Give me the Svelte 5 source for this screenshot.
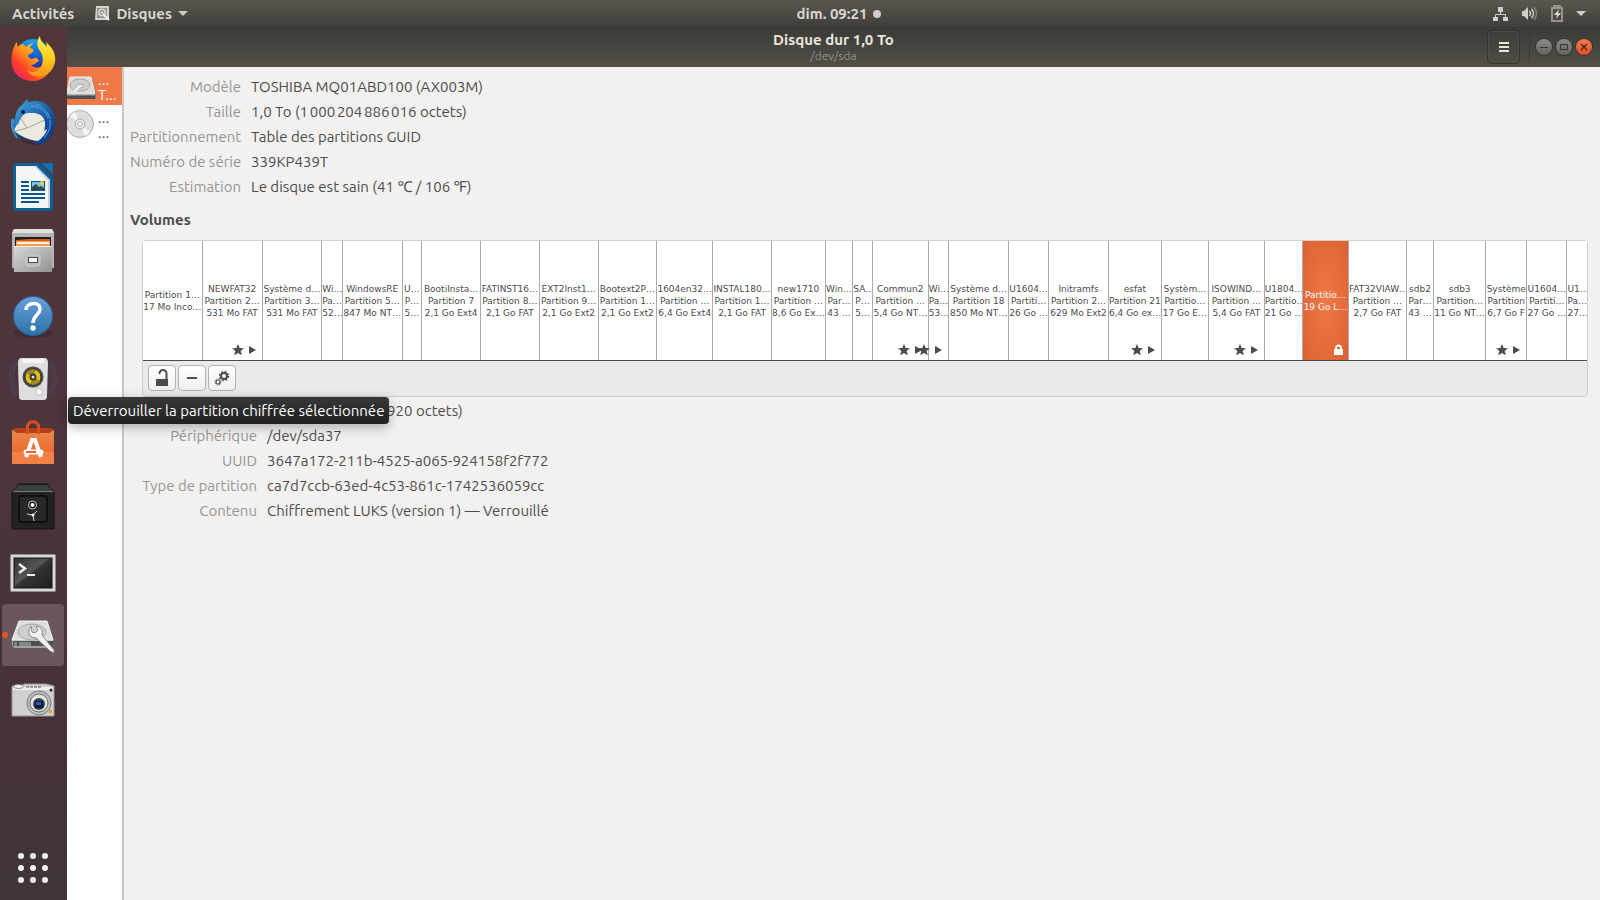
<script lang="ts">
  type Volume = {
    size: number;
    lines: string[];
    boot?: boolean;
    locked?: boolean;
  };

  const dock = [
    { id: 'firefox', label: 'Firefox' },
    { id: 'thunderbird', label: 'Thunderbird' },
    { id: 'writer', label: 'LibreOffice Writer' },
    { id: 'files', label: 'Fichiers' },
    { id: 'help', label: 'Aide' },
    { id: 'speaker', label: 'Rhythmbox' },
    { id: 'software', label: 'Logiciels' },
    { id: 'safe', label: 'Coffre' },
    { id: 'terminal', label: 'Terminal' },
    { id: 'disks', label: 'Disques' },
    { id: 'camera', label: "Capture d'écran" },
  ];

  const diskInfo = [
    ['Modèle', 'TOSHIBA MQ01ABD100 (AX003M)'],
    ['Taille', '1,0 To (1\u202f000\u202f204\u202f886\u202f016 octets)'],
    ['Partitionnement', 'Table des partitions GUID'],
    ['Numéro de série', '339KP439T'],
    ['Estimation', 'Le disque est sain (41 ℃ / 106 ℉)'],
  ];

  const volumeInfo = [
    ['Taille', '19 Go (18\u202f999\u202f491\u202f920 octets)'],
    ['Périphérique', '/dev/sda37'],
    ['UUID', '3647a172-211b-4525-a065-924158f2f772'],
    ['Type de partition', 'ca7d7ccb-63ed-4c53-861c-1742536059cc'],
    ['Contenu', 'Chiffrement LUKS (version 1) — Verrouillé'],
  ];

  const volumes: Volume[] = [
    { size: 60, lines: ['Partition 1…', '17 Mo Inco…'] },
    { size: 60, lines: ['NEWFAT32', 'Partition 2…', '531 Mo FAT'], boot: true },
    { size: 60, lines: ['Système d…', 'Partition 3…', '531 Mo FAT'] },
    { size: 20, lines: ['Wi…', 'Pa…', '52…'] },
    { size: 60, lines: ['WindowsRE', 'Partition 5…', '847 Mo NT…'] },
    { size: 19, lines: ['U…', 'P…', '5…'] },
    { size: 59, lines: ['BootiInsta…', 'Partition 7', '2,1 Go Ext4'] },
    { size: 59, lines: ['FATINST16…', 'Partition 8…', '2,1 Go FAT'] },
    { size: 59, lines: ['EXT2Inst1…', 'Partition 9…', '2,1 Go Ext2'] },
    { size: 59, lines: ['Bootext2P…', 'Partition 1…', '2,1 Go Ext2'] },
    { size: 56, lines: ['1604en32…', 'Partition …', '6,4 Go Ext4'] },
    { size: 59, lines: ['INSTAL180…', 'Partition 1…', '2,1 Go FAT'] },
    { size: 54, lines: ['new1710', 'Partition …', '8,6 Go Ex…'] },
    { size: 27, lines: ['Win…', 'Par…', '43 …'] },
    { size: 19, lines: ['SA…', 'P…', '5…'] },
    { size: 56, lines: ['Commun2', 'Partition …', '5,4 Go NT…'], boot: true },
    { size: 20, lines: ['Wi…', 'Pa…', '53…'], boot: true },
    { size: 60, lines: ['Système d…', 'Partition 18', '850 Mo NT…'] },
    { size: 40, lines: ['U1604…', 'Partiti…', '26 Go …'] },
    { size: 60, lines: ['Initramfs', 'Partition 2…', '629 Mo Ext2'] },
    { size: 53, lines: ['esfat', 'Partition 21', '6,4 Go ex…'], boot: true },
    { size: 47, lines: ['Systèm…', 'Partitio…', '17 Go E…'] },
    { size: 56, lines: ['ISOWIND…', 'Partition …', '5,4 Go FAT'], boot: true },
    { size: 38, lines: ['U1804…', 'Partitio…', '21 Go …'] },
    { size: 46, lines: ['Partitio…', '19 Go L…'], locked: true },
    { size: 58, lines: ['FAT32VIAW…', 'Partition …', '2,7 Go FAT'] },
    { size: 27, lines: ['sdb2', 'Par…', '43 …'] },
    { size: 52, lines: ['sdb3', 'Partition…', '11 Go NT…'] },
    { size: 41, lines: ['Système', 'Partition', '6,7 Go F'], boot: true },
    { size: 40, lines: ['U1604…', 'Partiti…', '27 Go …'] },
    { size: 20, lines: ['U1…', 'Pa…', '27…'] },
  ];

  let selected = $state(24);
</script>

{#snippet caret()}
  <svg width="10" height="6" viewBox="0 0 10 6"><path d="M0 0h10L5 5z" fill="#d0cec9" /></svg>
{/snippet}

{#snippet details(rows: string[][], nested: boolean)}
  <dl class="details" class:nested>
    {#each rows as [label, value]}
      <dt>{label}</dt>
      <dd>{value}</dd>
    {/each}
  </dl>
{/snippet}

{#snippet dockIcon(id: string)}
  <svg width="48" height="48" viewBox="0 0 48 48">
    {#if id === 'firefox'}
      <defs>
        <linearGradient id="ff-body" x1="1" y1="0" x2="0" y2="1">
          <stop offset="0.1" stop-color="#ffe83a" />
          <stop offset="0.45" stop-color="#ff9a1a" />
          <stop offset="0.7" stop-color="#ff4028" />
          <stop offset="1" stop-color="#e0108c" />
        </linearGradient>
        <linearGradient id="ff-globe" x1="0" y1="0" x2="0" y2="1">
          <stop offset="0" stop-color="#12a3f5" />
          <stop offset="0.6" stop-color="#1c4fc8" />
          <stop offset="1" stop-color="#3b1b80" />
        </linearGradient>
        <linearGradient id="ff-tail" x1="0" y1="0" x2="0" y2="1">
          <stop offset="0" stop-color="#fff44f" />
          <stop offset="0.5" stop-color="#ffd21e" />
          <stop offset="1" stop-color="#ff9016" />
        </linearGradient>
      </defs>
      <circle cx="24" cy="21" r="17" fill="url(#ff-globe)" />
      <path d="M8 7c0 2 0 3 1 5 1-2 3-3 5-3l3 3c3-3 5-4 8-4-2 1-4 3-4 5l3 1c1 3-1 4-5 6 0 2 1 3 3 4 2 0 4-2 6-1l2 3c-2 0-3 4-8 4 5 5 14 3 15-7 2-5 0-9-2-12 8 4 10 13 9 16-2 12-11 19-20 19C11 46 2 37 2.500 25 2.500 17 5 10 8 7z" fill="url(#ff-body)" />
      <path d="M31 1c-3 4-4 10 0 15 3 4 4 10 1 16-3 6-10 6-14 3 4 8 16 9 23 2 7-8 7-18 0-26-1-1-3-3-4-4l1 5c-3-3-7-6-7-11z" fill="url(#ff-tail)" />
    {:else if id === 'thunderbird'}
      <defs>
        <linearGradient id="tb" x1="0" y1="0" x2="1" y2="1">
          <stop offset="0" stop-color="#3fa9e0" />
          <stop offset="0.5" stop-color="#1d62ac" />
          <stop offset="1" stop-color="#0b2a78" />
        </linearGradient>
      </defs>
      <path d="M6 21C6 10 15 3 25 2c13-1 22 10 21 23-1 11-8 19-17 21l-7-4C8 44 2 34 2 25c0-3 1-4 2-6z" fill="url(#tb)" />
      <path d="M5 31l9-16c6-4 17-2 24 4 4 5 0 17-9 23-9-1-19-5-24-11z" fill="#ece9e1" />
      <path d="M10 17l8 12 20-9M18 29l-12 3" fill="none" stroke="#aaa69b" />
      <path d="M13 6l5-6 2 5c11-4 22 3 25 11 3 15-4 25-15 29l7-7 1-8-3 2c4-13-3-19-14-18-7-1-10 6-12 12-5-8-1-17 4-20z" fill="url(#tb)" />
      <path d="M22 7c9 0 14 5 17 12M27 5c7 2 12 8 14 15M41 21c1 8-2 13-6 18M3 20c-1 8 1 14 5 19" fill="none" stroke="#54a9e4" />
      <path d="M7 35c7 4 15 5 22 11-8 1-17-2-22-11z" fill="#3b2727" opacity=".75" />
      <circle cx="14" cy="13" r="2" fill="#0a1a3a" />
    {:else if id === 'writer'}
      <path d="M7 0h23l14 14v31a3 3 0 0 1-3 3H7a3 3 0 0 1-3-3V3a3 3 0 0 1 3-3z" fill="#0a6096" />
      <path d="M32 0h12v12z" fill="#0873b0" />
      <path d="M7 3h20l14 14v28H7z" fill="#f4f5f6" />
      <path d="M27 3l14 14v28h-2V18L26 4z" fill="#cfd2d4" />
      <path d="M12 19h8M12 23h8M12 27h8M12 31h24M12 35h24M12 39h18" stroke="#0a5585" stroke-width="2" />
      <path d="M22 18h14v10H22z" fill="#0a5585" />
      <path d="M23 19h12v8H23z" fill="#79c3f0" />
      <path d="M23 27v-3l4-3 3 3 2-1 3 2v2z" fill="#36464b" />
      <circle cx="33" cy="20" r="2" fill="#f6ce3c" />
    {:else if id === 'files'}
      <defs>
        <linearGradient id="cab" x1="0" y1="0" x2="1" y2="1">
          <stop offset="0" stop-color="#d8d8d8" />
          <stop offset="1" stop-color="#929292" />
        </linearGradient>
      </defs>
      <path d="M5 2h38l2 4v35H3V6z" fill="#b4b4b4" />
      <path d="M5 2h38l2 4H3z" fill="#e0e0df" />
      <path d="M6 10h36v11H6z" fill="#1f1f1f" />
      <path d="M7 13l13-1h21v8H7z" fill="#d6581c" />
      <path d="M7 14h34v6H7z" fill="#f3a04b" />
      <path d="M8 15h32v2H8z" fill="#fff0d8" />
      <path d="M5 19h38v26H5z" fill="url(#cab)" />
      <path d="M5 19h38v1H5z" fill="#ededed" />
      <rect x="17" y="28" width="14" height="11" rx="2" fill="#b9b9b9" stroke="#cecece" />
      <rect x="19.500" y="30.500" width="9" height="5" fill="#f3f3f3" stroke="#4c4c4c" />
    {:else if id === 'help'}
      <defs>
        <linearGradient id="hp" x1="0" y1="0" x2="0" y2="1">
          <stop offset="0" stop-color="#6ba0dc" />
          <stop offset="1" stop-color="#2a71a8" />
        </linearGradient>
      </defs>
      <ellipse cx="24" cy="42" rx="20" ry="5" fill="#3a262b" opacity=".5" />
      <circle cx="24" cy="25" r="19.500" fill="url(#hp)" stroke="#286096" />
      <path d="M17 19c0-8 14-9 14-1 0 6-7 6-7 14" fill="none" stroke="#fff" stroke-width="3.500" />
      <circle cx="24" cy="37" r="2.700" fill="#fff" />
    {:else if id === 'speaker'}
      <path d="M6 7C-1 16-1 31 7 40M9 8c-7 9-7 22 0 30M42 7c7 9 7 24-1 33M39 8c7 9 7 22 0 30" fill="none" stroke="#4a4a68" stroke-width="1.500" opacity=".65" />
      <path d="M13 3h22c3 0 4 2 4 5l-1 33c0 3-1 4-4 4H14c-3 0-4-1-4-4L9 8c0-3 1-5 4-5z" fill="#dededc" />
      <path d="M13 4h22v4H13z" fill="#f4f4f2" />
      <circle cx="24" cy="22" r="10.500" fill="#484a49" />
      <circle cx="24" cy="22" r="8" fill="#e3c019" stroke="#303130" />
      <path d="M24 22l-7-4a8 8 0 0 1 10-3zM24 22l7 4a8 8 0 0 1-10 3z" fill="#a48916" />
      <circle cx="24" cy="22" r="3.500" fill="#353b42" />
      <circle cx="24" cy="22" r="1.500" fill="#dfe3e5" />
      <circle cx="30" cy="37" r="3.500" fill="#f7f7f7" stroke="#bebebe" />
    {:else if id === 'software'}
      <defs>
        <linearGradient id="bag" x1="0" y1="0" x2="0" y2="1">
          <stop offset="0" stop-color="#e98a4f" />
          <stop offset="0.65" stop-color="#ed6b2e" />
          <stop offset="0.66" stop-color="#f08045" />
        </linearGradient>
      </defs>
      <path d="M3 11l3-2h36l3 2v5H3z" fill="#b63e19" />
      <path d="M3 11l5 3h32l5-3v34H3z" fill="url(#bag)" />
      <path d="M18.500 15V6l3-3h5l3 3v9" fill="none" stroke="#d94f1e" stroke-width="3" />
      <path d="M17 38l6-17h3l6 17" fill="none" stroke="#fff" stroke-width="4" />
      <path d="M17 33h15" stroke="#fff" stroke-width="5" stroke-linecap="round" />
      <path d="M17 33h10" stroke="#e9652b" stroke-width="2" />
    {:else if id === 'safe'}
      <path d="M10 1h28l7 8v37H3V9z" fill="#202321" stroke="#121312" />
      <path d="M10 2h28l6 6H4z" fill="#39413d" />
      <path d="M4 8.500h40" stroke="#777b70" />
      <rect x="10" y="13" width="28" height="26" rx="3" fill="#272926" stroke="#090a09" stroke-width="1.500" />
      <circle cx="23.500" cy="22" r="4" fill="#111" stroke="#c6c9c6" />
      <circle cx="23.500" cy="22" r="2" fill="#fff" />
      <path d="M24 32l-6-1M24 32l4-4M24 32l1 6" stroke="#d5d7d4" />
      <circle cx="24" cy="32" r="1.500" fill="#fff" />
    {:else if id === 'terminal'}
      <defs>
        <linearGradient id="term" x1="0" y1="0" x2="1" y2="1">
          <stop offset="0" stop-color="#333" />
          <stop offset="0.45" stop-color="#555" />
          <stop offset="0.5" stop-color="#343434" />
          <stop offset="1" stop-color="#1c1c1c" />
        </linearGradient>
      </defs>
      <rect x="1.500" y="7.500" width="45" height="37" rx="1" fill="#d8d8d8" stroke="#8d8d8d" />
      <rect x="5" y="11" width="38" height="30" fill="url(#term)" stroke="#111" />
      <path d="M10 17l6 4.500-6 4.500" fill="none" stroke="#eee" stroke-width="2.500" />
      <path d="M18 28h8" stroke="#eee" stroke-width="2" />
    {:else if id === 'disks'}
      <path d="M10 10h28l6 19v6l-3 2H6l-3-2v-6z" fill="#9fa19f" />
      <path d="M10 10h28l6 19H3z" fill="#dededc" stroke="#f4f4f2" />
      <ellipse cx="23" cy="21" rx="14" ry="8" fill="#cfcfcd" stroke="#a9a9a7" />
      <path d="M4 30h40v5H4z" fill="#4c504d" />
      <path d="M5 31h3v4H5zM10 31h12v4H10z" fill="#828783" />
      <path d="M22 15l1 6 3 1 3-3-2-4c6 1 7 5 6 9l12 15v3l-4-2-14-13c-6 0-10-5-5-12z" fill="#f1f1ef" stroke="#858783" />
    {:else}
      <path d="M3 11h9l3-2h22l8 2v30H3z" fill="#d0d0ce" stroke="#999" />
      <path d="M4 12h40v3H4z" fill="#eeeeec" />
      <ellipse cx="9.500" cy="11.500" rx="5" ry="2" fill="#f2f2f0" stroke="#888" />
      <path d="M17 12h16" stroke="#555" stroke-dasharray="3 1" />
      <circle cx="30" cy="28" r="12" fill="#bdbfbf" stroke="#777b7c" />
      <circle cx="30" cy="28" r="9" fill="#e3e5e5" stroke="#666b6d" />
      <circle cx="30" cy="29" r="6" fill="#3e4142" />
      <path d="M26 26h8v7h-8z" fill="#061a3c" />
      <path d="M27 27h5v3h-5z" fill="#1e5fc2" />
      <circle cx="42" cy="15" r="1.500" fill="#222" />
      <path d="M40 35h3v3h-3z" fill="#ef9a1d" />
    {/if}
  </svg>
{/snippet}

<div class="desktop">
  <header class="topbar">
    <div class="top-left">
      <button>Activités</button>
      <button class="app-menu">
        <svg width="15" height="15" viewBox="0 0 15 15">
          <path d="M1 0h13v14H0z" fill="#d5d4d0" />
          <path d="M2 2h10v10H2z" fill="#8f8e88" />
          <circle cx="7" cy="6.500" r="4" fill="#d8d7d3" />
          <circle cx="7" cy="6.500" r="2" fill="none" stroke="#777670" />
          <path d="M8 8l6 6" stroke="#eee" stroke-width="2" />
        </svg>
        Disques
        {@render caret()}
      </button>
    </div>
    <button class="clock">dim. 09:21 <span class="dot"></span></button>
    <div class="top-right">
      <button class="status" aria-label="Menu système">
        <svg width="16" height="16" viewBox="0 0 16 16">
          <path d="M5 1h5v5H5zM0 11h5v4H0zM10 11h5v4h-5z" fill="#d0cec9" />
          <path d="M7.500 5v3M2.500 11V8.500h10V11" fill="none" stroke="#d0cec9" />
        </svg>
        <svg width="16" height="16" viewBox="0 0 16 16">
          <path d="M0 5h2l4-4v13l-4-4H0z" fill="#d0cec9" />
          <path d="M7.500 5q2 2.500 0 5M9.500 3q4 4.500 0 9" fill="none" stroke="#d0cec9" stroke-width="1.500" />
          <path d="M12 1q5 6.500 0 13" fill="none" stroke="#85837c" stroke-width="1.500" />
        </svg>
        <svg width="12" height="17" viewBox="0 0 12 17">
          <path d="M3 3V1h6v2M1 3h10v13H1z" fill="none" stroke="#96948d" stroke-width="2" />
          <path d="M8 4L3 10h3l-1 4 5-6H7z" fill="#d8d6d1" />
        </svg>
        {@render caret()}
      </button>
    </div>
  </header>

  <div class="workspace">
    <nav class="dock" aria-label="Applications">
      {#each dock as app}
        <button class="launcher" class:active={app.id === 'disks'} aria-label={app.label}>
          {@render dockIcon(app.id)}
        </button>
      {/each}
      <button class="launcher show-apps" aria-label="Afficher les applications">
        <svg width="30" height="30" viewBox="0 0 30 30" fill="#f2f1f0">
          {#each [3, 15, 27] as cy}
            {#each [3, 15, 27] as cx}
              <circle {cx} {cy} r="3" />
            {/each}
          {/each}
        </svg>
      </button>
    </nav>

    <section class="window">
      <header class="titlebar">
        <div class="title">
          <h1>Disque dur 1,0 To</h1>
          <p>/dev/sda</p>
        </div>
        <div class="title-actions">
          <button class="hamburger" aria-label="Menu">
            <svg width="10" height="11" viewBox="0 0 10 11"><path d="M0 1h10M0 5h10M0 9h10" stroke="#e8e5dc" stroke-width="2" /></svg>
          </button>
          <span class="divider"></span>
          <button class="control" aria-label="Réduire">
            <svg width="8" height="8" viewBox="0 0 8 8"><path d="M0 4.500h8" stroke="#35342f" /></svg>
          </button>
          <button class="control" aria-label="Restaurer">
            <svg width="8" height="8" viewBox="0 0 8 8"><path d="M.5 1.500h7v5h-7z" fill="none" stroke="#35342f" /></svg>
          </button>
          <button class="control close" aria-label="Fermer">
            <svg width="8" height="8" viewBox="0 0 8 8"><path d="M1 1l6 6M7 1L1 7" stroke="#4a2113" stroke-width="1.200" /></svg>
          </button>
        </div>
      </header>

      <div class="panes">
        <aside class="drives">
          <button class="drive current" aria-label="Disque dur 1,0 To">
            <svg width="29" height="28" viewBox="0 -4 29 28">
              <path d="M3 1h22l4 17v5H0V17z" fill="#777977" />
              <path d="M3 1h21l4 17H0V16z" fill="#dcdcda" stroke="#eeeeec" />
              <ellipse cx="13" cy="9" rx="10" ry="6" fill="#cfcfcd" stroke="#aaa" />
              <ellipse cx="13" cy="10" rx="4" ry="2" fill="#e6e6e4" stroke="#aaa" />
              <path d="M13 10l-6 6" stroke="#f5f5f5" stroke-width="2" />
              <path d="M0 20h28v3H0z" fill="#4d504e" />
            </svg>
            <span class="drive-text"><span>...</span><span>T...</span></span>
          </button>
          <button class="drive" aria-label="Lecteur CD/DVD">
            <svg width="29" height="30" viewBox="0 0 29 30">
              <circle cx="13" cy="15" r="13.500" fill="#dedede" stroke="#aaa" />
              <path d="M13 15L3 7a13 13 0 0 1 5-4zM13 15l10 8a13 13 0 0 1-5 4z" fill="#f6f6f6" />
              <path d="M13 15L25 10v4zM13 15L1 20v-4z" fill="#e4dbe8" />
              <circle cx="13" cy="15" r="5" fill="#eee" stroke="#aaa" />
              <circle cx="13" cy="15" r="2.500" fill="#fff" stroke="#aaa" />
            </svg>
            <span class="drive-text"><span>...</span><span>...</span></span>
          </button>
        </aside>

        <main>
          {@render details(diskInfo, false)}

          <h2>Volumes</h2>
          <div class="volumes">
            <div class="segments">
              {#each volumes as volume, i}
                <button
                  class="segment"
                  class:selected={i === selected}
                  style="flex-grow: {volume.size}"
                  onclick={() => (selected = i)}
                >
                  <span class="segment-text">
                    {#each volume.lines as line}
                      <span>{line}</span>
                    {/each}
                  </span>
                  {#if volume.boot}
                    <svg class="marks" width="26" height="12" viewBox="0 0 26 12">
                      <path d="M6 0l1.700 3.900 4.300.3-3.300 2.900 1.100 4.200L6 9.100l-3.800 2.200 1.100-4.200L0 4.200l4.300-.3zM17 2v8l7-4z" fill="#4c4c4c" />
                    </svg>
                  {:else if volume.locked}
                    <svg class="marks" width="11" height="12" viewBox="0 0 11 12">
                      <path d="M1 5h9v6H1z" fill="#fff" />
                      <path d="M3 6V4a2.500 2.500 0 0 1 5 0v2" fill="none" stroke="#fff" stroke-width="1.800" />
                    </svg>
                  {/if}
                </button>
              {/each}
            </div>
            <div class="toolbar">
              <button aria-label="Déverrouiller la partition chiffrée sélectionnée" aria-describedby="unlock-tip">
                <svg width="16" height="18" viewBox="0 0 16 18">
                  <path d="M2 10h12v7H2z" fill="#4c4c4c" />
                  <path d="M5.500 5V4.500a3.500 3.500 0 0 1 7 0V11" fill="none" stroke="#4c4c4c" stroke-width="2" />
                </svg>
              </button>
              <button aria-label="Supprimer la partition">
                <svg width="16" height="16" viewBox="0 0 16 16"><path d="M3 8h10" stroke="#4c4c4c" stroke-width="2" /></svg>
              </button>
              <button aria-label="Options supplémentaires">
                <svg width="16" height="16" viewBox="0 0 16 16" fill="none" stroke="#4c4c4c">
                  <circle cx="10" cy="6" r="3" stroke-width="2" />
                  <circle cx="10" cy="6" r="4.500" stroke-width="1.500" stroke-dasharray="1.800 1.734" />
                  <circle cx="4" cy="12" r="2" stroke-width="1.200" />
                  <circle cx="4" cy="12" r="3" stroke-dasharray="1.200 1.156" />
                </svg>
              </button>
              <div class="tooltip" role="tooltip" id="unlock-tip">
                Déverrouiller la partition chiffrée sélectionnée
              </div>
            </div>
          </div>

          {@render details(volumeInfo, true)}
        </main>
      </div>
    </section>
  </div>
</div>

<style>
  :global(body) {
    margin: 0;
  }

  .desktop {
    display: flex;
    flex-direction: column;
    min-height: 100vh;
    font-family: Ubuntu, 'Noto Sans', sans-serif;
    font-size: 15px;
    color: #4c4c4c;
    background: #f2f1f0;
  }
  button {
    padding: 0;
    border: none;
    background: none;
    color: inherit;
    font: inherit;
  }
  svg {
    display: block;
    flex: none;
  }
  h1, h2, p, dl, dt, dd {
    margin: 0;
  }

  .topbar {
    display: flex;
    align-items: center;
    height: 27px;
    padding: 0 14px 0 12px;
    background: linear-gradient(#5a574e, #403f3a);
    color: #d8d6d1;
    font-weight: 700;
  }
  .top-left, .top-right {
    display: flex;
    flex: 1;
    gap: 21px;
  }
  .top-right {
    justify-content: flex-end;
  }
  .app-menu, .clock, .status {
    display: flex;
    align-items: center;
    gap: 6px;
  }
  .clock {
    margin-left: 80px;
  }
  .status {
    gap: 13px;
  }
  .dot {
    width: 8px;
    height: 8px;
    border-radius: 50%;
    background: #d0cec9;
  }

  .workspace {
    display: flex;
    flex: 1;
  }
  .dock {
    display: flex;
    flex-direction: column;
    gap: 2px;
    flex: none;
    width: 65px;
    padding: 1px 0 1px 2px;
    background: linear-gradient(#523639, #4c353c 50%, #463138 80%, #3f3537);
  }
  .launcher {
    position: relative;
    display: flex;
    align-items: center;
    justify-content: center;
    width: 62px;
    height: 62px;
    border-radius: 4px;
  }
  .launcher.active {
    background: #69575d;
  }
  .launcher.active::before {
    content: '';
    position: absolute;
    left: 0;
    top: 28px;
    width: 6px;
    height: 6px;
    border-radius: 50%;
    background: #e95420;
  }
  .show-apps {
    margin-top: auto;
  }

  .window {
    display: flex;
    flex: 1;
    flex-direction: column;
    min-width: 0;
  }
  .titlebar {
    display: grid;
    grid-template-columns: 1fr auto 1fr;
    align-items: center;
    height: 40px;
    background: linear-gradient(#3b3a36, #524f48);
  }
  .title {
    grid-column: 2;
    text-align: center;
  }
  h1 {
    color: #e8e5dc;
    font-size: 15px;
    line-height: 18px;
  }
  .title p {
    color: #93918a;
    font-size: 12px;
    line-height: 14px;
  }
  .title-actions {
    display: flex;
    align-items: center;
    justify-content: flex-end;
    gap: 4px;
    padding-right: 8px;
  }
  .hamburger {
    display: flex;
    align-items: center;
    justify-content: center;
    width: 33px;
    height: 34px;
    border: 1px solid #35342f;
    border-radius: 5px;
    box-shadow: inset 0 0 0 1px #504e47;
  }
  .divider {
    width: 1px;
    height: 28px;
    margin: 0 2px 0 5px;
    background: #393832;
  }
  .control {
    display: flex;
    align-items: center;
    justify-content: center;
    width: 16px;
    height: 16px;
    border-radius: 50%;
    background: linear-gradient(#8b8983, #64625b);
    box-shadow: 0 0 0 1px #35342f;
  }
  .control.close {
    background: linear-gradient(#f47b55, #df4b1b);
  }

  .panes {
    display: flex;
    flex: 1;
  }
  .drives {
    flex: none;
    width: 55px;
    border-right: 2px solid #c9c8c7;
    background: #fff;
  }
  .drive {
    display: flex;
    align-items: center;
    gap: 2px;
    width: 100%;
    height: 38px;
  }
  .drive.current {
    background: #f07746;
    color: #fff;
  }
  .drive-text {
    display: flex;
    flex-direction: column;
    padding-top: 2px;
    line-height: 15px;
    text-align: left;
  }

  main {
    flex: 1;
    min-width: 0;
    padding: 7px 12px 0 6px;
  }
  .details {
    display: grid;
    grid-template-columns: 111px 1fr;
    column-gap: 10px;
    line-height: 25px;
    white-space: nowrap;
  }
  .details.nested {
    grid-template-columns: 115px 1fr;
    margin-left: 12px;
    padding-top: 1px;
  }
  dt {
    color: #969593;
    text-align: right;
  }
  h2 {
    margin: 11px 0 10px;
    font-size: 15px;
    line-height: 20px;
  }

  .volumes {
    margin-left: 12px;
    border: 1px solid #d0cfce;
    border-radius: 4px;
    background: #ebeae9;
  }
  .segments {
    display: flex;
    height: 119px;
    border-bottom: 1px solid #4c4c4c;
    background: #fff;
  }
  .segment {
    position: relative;
    display: flex;
    align-items: center;
    flex: 1 1 0;
    min-width: 0;
    box-sizing: border-box;
    border-right: 1px solid #aaa;
    font: 9px/12px 'DejaVu Sans', sans-serif;
  }
  .segment:last-child {
    border-right: none;
  }
  .segment.selected {
    background: radial-gradient(#f07746, #dc6331);
    color: #fff;
  }
  .segment-text {
    display: flex;
    flex: 1;
    flex-direction: column;
    min-width: 0;
    overflow: hidden;
    text-align: center;
    white-space: nowrap;
  }
  .marks {
    position: absolute;
    right: 4px;
    bottom: 4px;
  }

  .toolbar {
    position: relative;
    display: flex;
    gap: 2px;
    padding: 4px 5px 5px;
  }
  .toolbar button {
    display: flex;
    align-items: center;
    justify-content: center;
    box-sizing: border-box;
    width: 28px;
    height: 26px;
    border: 1px solid #b3b2b0;
    border-radius: 4px;
    background: linear-gradient(#fff, #f0efee);
  }
  .tooltip {
    position: absolute;
    top: 36px;
    left: -75px;
    z-index: 1;
    padding: 0 5px;
    border-radius: 4px;
    background: linear-gradient(rgba(48, 48, 48, 0.96), rgba(24, 24, 24, 0.96));
    box-shadow: 0 3px 12px rgba(0, 0, 0, 0.3);
    color: #fff;
    line-height: 27px;
    white-space: nowrap;
  }
</style>
